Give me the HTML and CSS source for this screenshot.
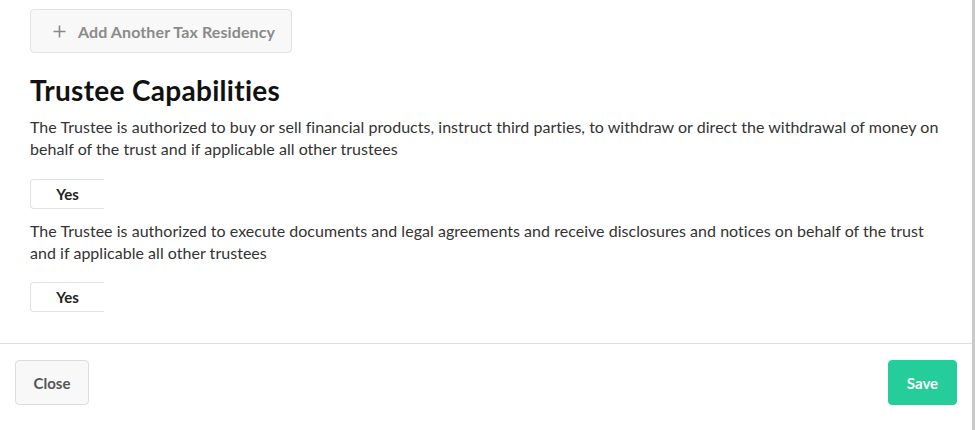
FILE: index.html
```html
<!DOCTYPE html>
<html>
<head>
<meta charset="utf-8">
<link rel="stylesheet" href="styles.css">
</head>
<body>
<div class="modal">
  <div class="modal-body">
    <button class="add-btn" type="button">
      <svg class="plus" width="13" height="13" viewBox="0 0 13 13"><path d="M6.5 0.5v12M0.5 6.5h12" stroke="#888" stroke-width="1.6" fill="none"/></svg>
      <span>Add Another Tax Residency</span>
    </button>
    <h2 class="title">Trustee Capabilities</h2>
    <p class="desc">The Trustee is authorized to buy or sell financial products, instruct third parties, to withdraw or direct the withdrawal of money on behalf of the trust and if applicable all other trustees</p>
    <div class="seg"><span class="seg-opt">Yes</span></div>
    <p class="desc">The Trustee is authorized to execute documents and legal agreements and receive disclosures and notices on behalf of the trust and if applicable all other trustees</p>
    <div class="seg seg-last"><span class="seg-opt">Yes</span></div>
  </div>
  <div class="modal-footer">
    <button class="btn btn-close" type="button">Close</button>
    <button class="btn btn-save" type="button">Save</button>
  </div>
</div>
</body>
</html>
```
FILE: styles.css
```css
* { box-sizing: border-box; }
html, body { margin: 0; padding: 0; background: #fff; }
body {
  font-family: "Lato", "Liberation Sans", sans-serif;
  color: #333;
  width: 975px;
  height: 430px;
  overflow: hidden;
}
.modal {
  width: 975px;
  height: 430px;
  border-right: 3px solid #c9c9c9;
  display: flex;
  flex-direction: column;
}
.modal-body {
  padding: 9px 22px 0 30px;
  height: 344px;
  border-bottom: 1px solid #dedede;
}
.add-btn {
  display: flex;
  align-items: center;
  width: 262px;
  height: 44px;
  padding: 0 0 0 22px;
  background: #f8f8f8;
  border: 1px solid #e3e3e3;
  border-radius: 4px;
  font-family: inherit;
  font-size: 16px;
  letter-spacing: 0.1px;
  font-weight: 700;
  color: #8a8a8a;
  cursor: pointer;
}
.add-btn .plus { margin-right: 12px; }
.title {
  margin: 20px 0 0 0;
  font-size: 28px;
  font-weight: 700;
  letter-spacing: 0.3px;
  color: #111;
  line-height: 34px;
}
.desc {
  margin: 9px 0 0 0;
  font-size: 16px;
  letter-spacing: 0.03px;
  line-height: 22px;
  color: #333;
}
.seg {
  margin: 19px 0 11px 0;
  width: 74px;
  height: 30px;
  border: 1px solid #e2e2e2;
  border-right: none;
  border-radius: 4px 0 0 4px;
  display: flex;
  align-items: center;
  justify-content: center;
}
.seg-last { margin-top: 18px; }
.seg-opt {
  font-size: 15px;
  font-weight: 700;
  color: #222;
}
.modal-footer {
  display: flex;
  justify-content: space-between;
  padding: 16px 15px 0 15px;
}
.btn {
  height: 45px;
  border-radius: 4px;
  font-family: inherit;
  font-size: 15px;
  font-weight: 700;
  cursor: pointer;
}
.btn-close {
  width: 74px;
  background: #f8f8f8;
  border: 1px solid #dcdcdc;
  color: #555;
}
.btn-save {
  width: 69px;
  background: #25cd9b;
  border: 1px solid #25cd9b;
  color: #fff;
}
```
